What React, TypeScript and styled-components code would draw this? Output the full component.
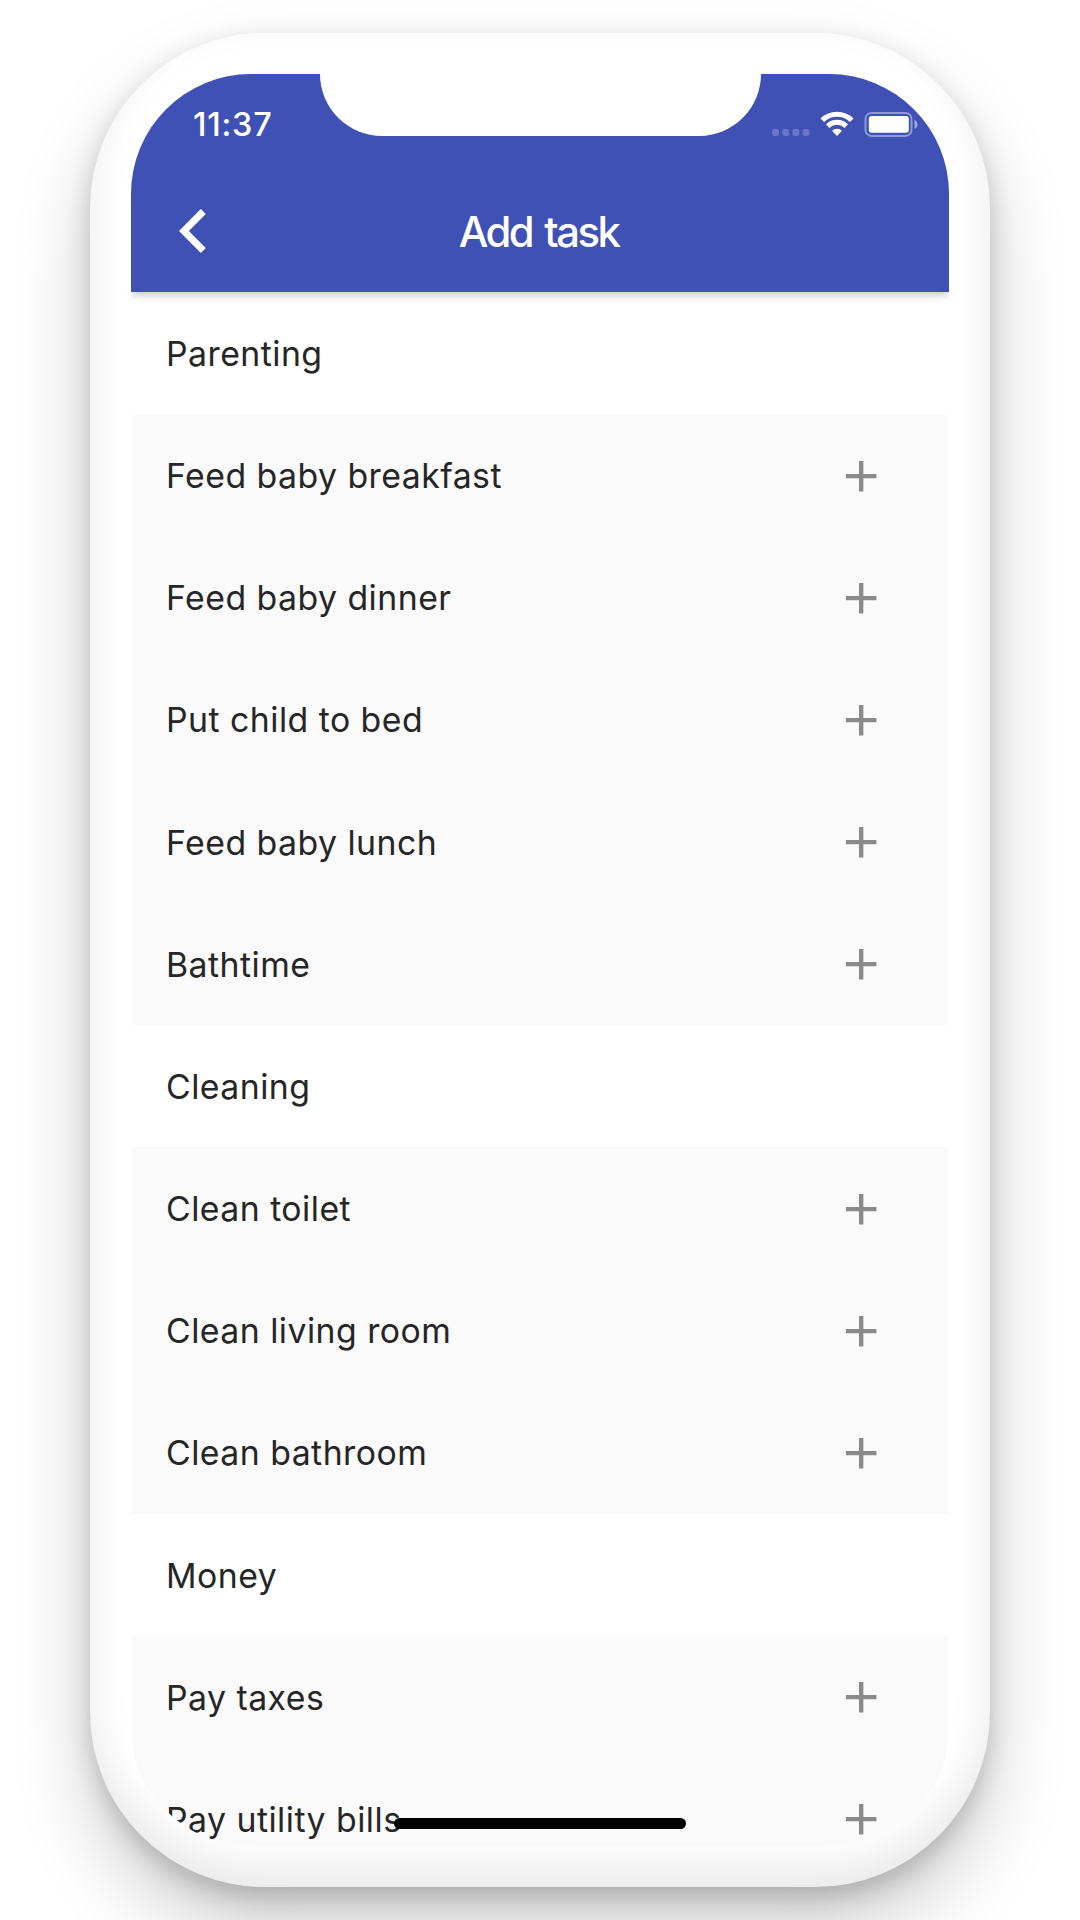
import React from "react";
import styled, { createGlobalStyle } from "styled-components";

const GlobalStyle = createGlobalStyle`
  * { box-sizing: border-box; }
  html, body { margin: 0; padding: 0; background: #fff; }
  body { height: 1920px; overflow: hidden; font-family: Inter, "Liberation Sans", sans-serif; }
`;

const Stage = styled.main`
  display: flex;
  justify-content: center;
  width: 1080px;
  height: 1920px;
  padding-top: 33px;
  overflow: hidden;
  background: #fff;
`;

const Phone = styled.div`
  width: 900px;
  height: 1854px;
  padding: 41px;
  border-radius: 175px;
  background: #fff;
  box-shadow:
    inset 0 -20px 40px rgba(0, 0, 0, 0.085),
    0 10px 24px rgba(0, 0, 0, 0.18),
    0 40px 80px rgba(0, 0, 0, 0.2);
`;

const Screen = styled.div`
  position: relative;
  display: flex;
  flex-direction: column;
  width: 818px;
  height: 1772px;
  overflow: hidden;
  border-radius: 120px;
  background: #fafafa;
`;

const Notch = styled.div`
  position: absolute;
  top: 0;
  left: 189px;
  width: 441px;
  height: 62.4px;
  border-radius: 0 0 62px 62px;
  background: #fff;
`;

const HomeIndicator = styled.div`
  position: absolute;
  left: 263px;
  bottom: 17.5px;
  width: 292px;
  height: 11px;
  border-radius: 6px;
  background: #000;
`;

const AppBar = styled.header`
  position: relative;
  flex: none;
  height: 218.4px;
  color: #fff;
  background: #3f51b5;
  box-shadow: 0 3px 9px rgba(0, 0, 0, 0.22);
`;

const StatusBar = styled.div`
  display: flex;
  align-items: center;
  justify-content: space-between;
  height: 96px;
  padding: 5px 31px 0 62px;
`;

const Clock = styled.time`
  font-size: 32.4px;
  font-weight: 550;
  line-height: 40px;
  letter-spacing: 0.8px;
`;

const NavBar = styled.div`
  display: grid;
  grid-template-columns: 96px 1fr 96px;
  align-items: center;
  height: 122.4px;
`;

const BackButton = styled.button`
  display: flex;
  padding: 0 0 0 47px;
  border: 0;
  color: inherit;
  background: none;
`;

const Title = styled.h1`
  margin: 0;
  padding: 1px 3px 0 0;
  text-align: center;
  font-size: 41.8px;
  font-weight: 550;
  line-height: 50px;
  letter-spacing: -2.5px;
  word-spacing: 3.5px;
`;

const Row = styled.div<{ $heading?: boolean }>`
  display: flex;
  flex: none;
  align-items: center;
  justify-content: space-between;
  height: 122.17px;
  padding: 0 61.2px 0 35px;
  color: #262626;
  background: ${(p) => (p.$heading ? "#fff" : "#fafafa")};
`;

const Label = styled.span`
  padding-top: 1px;
  font-size: 33.8px;
  font-weight: 375;
  line-height: 44px;
  letter-spacing: 0.47px;
  white-space: nowrap;
`;

const AddIcon = styled.svg`
  width: 52.36px;
  height: 52.36px;
  margin-top: 0.6px;
  fill: #8a8a8a;
`;

const StatusIconGroup = styled.svg`
  display: block;
  margin-bottom: 2px;
`;

const sections = [
  {
    name: "Parenting",
    tasks: ["Feed baby breakfast", "Feed baby dinner", "Put child to bed", "Feed baby lunch", "Bathtime"],
  },
  { name: "Cleaning", tasks: ["Clean toilet", "Clean living room", "Clean bathroom"] },
  { name: "Money", tasks: ["Pay taxes", "Pay utility bills"] },
];

function StatusIcons() {
  return (
    <StatusIconGroup width="146" height="26" viewBox="0 0 146 26" fill="none">
      <g fill="#fff" fillOpacity="0.22">
        {[0, 10.2, 20.4, 30.6].map((x) => (
          <rect key={x} x={x} y="18" width="7" height="7" rx="2.4" />
        ))}
      </g>
      <g fill="none" stroke="#fff" strokeWidth="5">
        <path d="M50.3 9.200a21 21 0 0 1 29.400 0" />
        <path d="M55.700 15.100a13.400 13.400 0 0 1 18.600 0" />
      </g>
      <path d="M65 25l-5-5.200a7.400 7.400 0 0 1 10 0z" fill="#fff" />
      <rect x="93.5" y="1.9" width="46" height="23" rx="6" stroke="#fff" strokeOpacity="0.42" strokeWidth="2" />
      <rect x="96.8" y="5" width="40" height="16.8" rx="3" fill="#fff" />
      <path d="M142.500 9v9c4-1.500 4-7.500 0-9z" fill="#fff" fillOpacity="0.5" />
    </StatusIconGroup>
  );
}

function TaskRow({ label }: { label: string }) {
  return (
    <Row>
      <Label>{label}</Label>
      <AddIcon viewBox="0 0 24 24">
        <path d="M19 13h-6v6h-2v-6H5v-2h6V5h2v6h6z" />
      </AddIcon>
    </Row>
  );
}

export default function App() {
  return (
    <>
      <GlobalStyle />
      <Stage>
        <Phone>
          <Screen>
            <AppBar>
              <StatusBar>
                <Clock>11:37</Clock>
                <StatusIcons />
              </StatusBar>
              <NavBar>
                <BackButton aria-label="Back">
                  <svg width="29" height="44" viewBox="0 0 29 44" fill="currentColor">
                    <path d="M22.800 0L27.800 5L10.800 22L27.800 39L22.800 44L1 22z" />
                  </svg>
                </BackButton>
                <Title>Add task</Title>
              </NavBar>
            </AppBar>
            {sections.map((section) => (
              <React.Fragment key={section.name}>
                <Row $heading>
                  <Label>{section.name}</Label>
                </Row>
                {section.tasks.map((task) => (
                  <TaskRow key={task} label={task} />
                ))}
              </React.Fragment>
            ))}
            <Notch />
            <HomeIndicator />
          </Screen>
        </Phone>
      </Stage>
    </>
  );
}
